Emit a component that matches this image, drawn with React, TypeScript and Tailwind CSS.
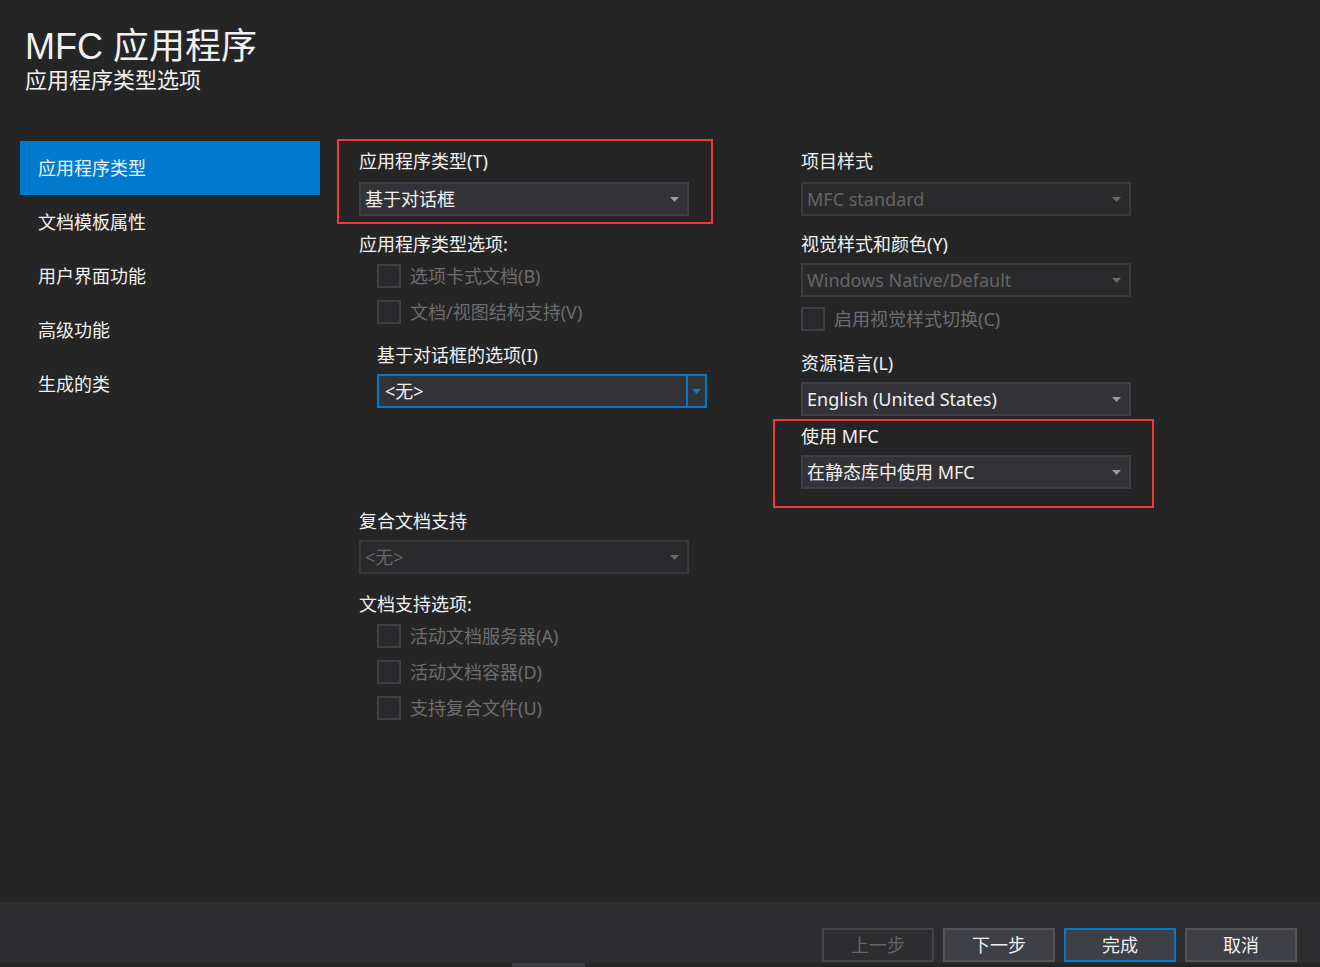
import React from 'react'

const FONT = { fontFamily: '"Noto Sans", "Noto Sans CJK SC", sans-serif' }
const HEAD_FONT = { fontFamily: '"Liberation Sans", "Noto Sans CJK SC", sans-serif' }

function Arrow({ color = '#999999' }: { color?: string }) {
  return (
    <svg width="9" height="5" viewBox="0 0 9 5" className="shrink-0">
      <path d="M0 0 L9 0 L4.5 5 Z" fill={color} />
    </svg>
  )
}

function Label({ text, indent = false }: { text: string; indent?: boolean }) {
  return (
    <div className={`h-6 leading-6 text-[18px] text-[#f1f1f1] whitespace-nowrap ${indent ? 'pl-[18px]' : ''}`}>
      {text}
    </div>
  )
}

function Select({ value, disabled = false }: { value: string; disabled?: boolean }) {
  return (
    <div
      className={`w-[330px] h-[34px] flex items-center justify-between pl-[4px] pr-[8px] border-2 ${
        disabled ? 'bg-[#2a2a2c] border-[#3a3a3e] text-[#656565]' : 'bg-[#333337] border-[#3f3f46] text-[#f1f1f1]'
      }`}
    >
      <span className="text-[18px] leading-none whitespace-nowrap">{value}</span>
      <Arrow color={disabled ? '#6a6a6a' : '#999999'} />
    </div>
  )
}

function Check({ text }: { text: string }) {
  return (
    <div className="flex items-center h-6 gap-[9px]">
      <div className="w-6 h-6 border-2 border-[#3f3f46] bg-[#29292b]" />
      <span className="text-[18px] leading-6 text-[#6d6d6d] whitespace-nowrap">{text}</span>
    </div>
  )
}

const navItems = ['应用程序类型', '文档模板属性', '用户界面功能', '高级功能', '生成的类']

function Button({ text, kind }: { text: string; kind: 'disabled' | 'normal' | 'primary' }) {
  const cls =
    kind === 'disabled'
      ? 'bg-[#2d2d30] border-[#434346] text-[#656565]'
      : kind === 'primary'
      ? 'bg-[#3f3f46] border-[#007acc] text-[#f1f1f1]'
      : 'bg-[#3f3f46] border-[#555555] text-[#f1f1f1]'
  return (
    <div className={`w-[112px] h-[34px] border-2 flex items-center justify-center text-[18px] ${cls}`}>{text}</div>
  )
}

export default function App() {
  return (
    <div className="w-[1320px] h-[967px] bg-[#252526] flex flex-col overflow-hidden" style={FONT}>
      {/* header */}
      <div className="h-[139px] pl-[25px] pt-[25px]" style={HEAD_FONT}>
        <div className="text-[36px] leading-[43px] text-[#f1f1f1] whitespace-nowrap">MFC 应用程序</div>
        <div className="text-[22px] leading-[25px] text-[#f1f1f1] whitespace-nowrap">应用程序类型选项</div>
      </div>

      <div className="flex-1 flex">
        {/* sidebar */}
        <div className="ml-[20px] mt-[2px] w-[300px] flex flex-col">
          {navItems.map((item, i) => (
            <div
              key={item}
              className={`h-[54px] flex items-center pl-[18px] text-[18px] text-[#f1f1f1] ${i === 0 ? 'bg-[#007acc]' : ''}`}
            >
              {item}
            </div>
          ))}
        </div>

        {/* left column */}
        <div className="ml-[17px] w-[376px] flex flex-col">
          <div className="h-[85px] border-2 border-[#f03a3a] pl-[20px] pt-[8px]">
            <Label text="应用程序类型(T)" />
            <div className="mt-[9px]">
              <Select value="基于对话框" />
            </div>
          </div>
          <div className="pl-[22px] mt-[8px] flex flex-col">
            <Label text="应用程序类型选项:" />
            <div className="pl-[18px] mt-[8px] flex flex-col gap-[12px]">
              <Check text="选项卡式文档(B)" />
              <Check text="文档/视图结构支持(V)" />
            </div>
            <div className="mt-[19px]">
              <Label text="基于对话框的选项(I)" indent />
            </div>
            <div className="mt-[7px] ml-[18px] w-[330px] h-[34px] flex border-2 border-[#007acc] bg-[#333337]">
              <div className="flex-1 flex items-center pl-[6px] text-[18px] text-[#f1f1f1]">&lt;无&gt;</div>
              <div className="w-[19px] border-l-2 border-[#007acc] flex items-center justify-center">
                <Arrow color="#007acc" />
              </div>
            </div>
            <div className="mt-[101px]">
              <Label text="复合文档支持" />
            </div>
            <div className="mt-[7px]">
              <Select value="<无>" disabled />
            </div>
            <div className="mt-[18px]">
              <Label text="文档支持选项:" />
            </div>
            <div className="pl-[18px] mt-[8px] flex flex-col gap-[12px]">
              <Check text="活动文档服务器(A)" />
              <Check text="活动文档容器(D)" />
              <Check text="支持复合文件(U)" />
            </div>
          </div>
        </div>

        {/* right column */}
        <div className="ml-[60px] w-[381px] flex flex-col">
          <div className="pl-[28px] pt-[10px] flex flex-col">
            <Label text="项目样式" />
            <div className="mt-[9px]">
              <Select value="MFC standard" disabled />
            </div>
            <div className="mt-[16px]">
              <Label text="视觉样式和颜色(Y)" />
            </div>
            <div className="mt-[7px]">
              <Select value="Windows Native/Default" disabled />
            </div>
            <div className="mt-[10px]">
              <Check text="启用视觉样式切换(C)" />
            </div>
            <div className="mt-[20px]">
              <Label text="资源语言(L)" />
            </div>
            <div className="mt-[7px]">
              <Select value="English (United States)" />
            </div>
          </div>
          <div className="mt-[3px] h-[89px] border-2 border-[#f03a3a] pl-[26px] pt-[3px]">
            <Label text="使用 MFC" />
            <div className="mt-[7px]">
              <Select value="在静态库中使用 MFC" />
            </div>
          </div>
        </div>
      </div>

      {/* footer */}
      <div className="h-[61px] bg-[#2d2d30] flex items-end justify-end gap-[9px] pr-[23px] pb-[1px]">
        <Button text="上一步" kind="disabled" />
        <Button text="下一步" kind="normal" />
        <Button text="完成" kind="primary" />
        <Button text="取消" kind="normal" />
      </div>
      <div className="h-[4px] bg-[#252526] flex">
        <div className="ml-[512px] w-[73px] h-[4px] bg-[#3e3e42]" />
      </div>
    </div>
  )
}
